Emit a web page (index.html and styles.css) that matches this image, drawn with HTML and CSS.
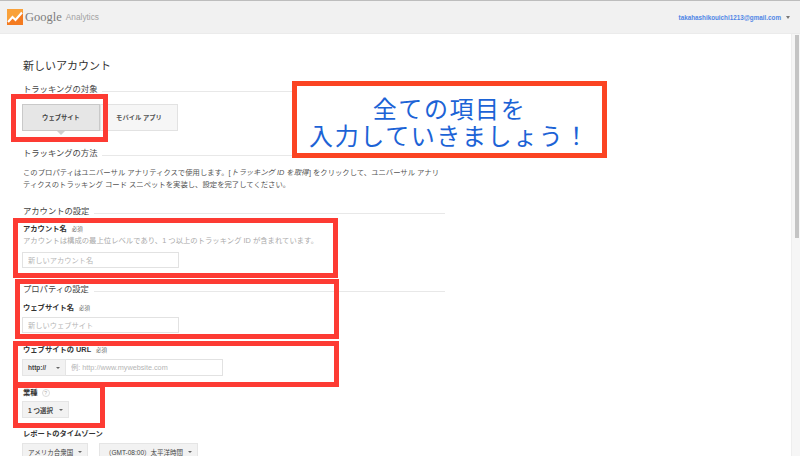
FILE: index.html
```html
<!DOCTYPE html>
<html lang="ja">
<head>
  <meta charset="UTF-8">
  <title>新しいアカウント - Google Analytics</title>
  <link rel="stylesheet" href="styles.css">
</head>
<body>
  <header class="topbar">
    <div class="brand">
      <svg class="logo" width="16" height="16" viewBox="0 0 16 16">
        <rect width="16" height="16" fill="#f47b20"/>
        <path d="M0 0 H16 V3 L8.5 10 L5.5 7 L0 12 Z" fill="#f9a13a"/>
        <path d="M1 13 L5.5 8 L8.5 11 L15 3.5" fill="none" stroke="#fff" stroke-width="2.2"/>
      </svg>
      <span class="brand-google">Google</span>
      <span class="brand-product">Analytics</span>
    </div>
    <div class="account">
      <span class="email">takahashikouichi1213@gmail.com</span>
      <i class="caret caret-dark"></i>
    </div>
  </header>

  <main class="content">
    <h1 class="title">新しいアカウント</h1>

    <h2 class="section-head"><span>トラッキングの対象</span></h2>
    <div class="toggle">
      <button class="toggle-btn active">ウェブサイト</button>
      <button class="toggle-btn">モバイル アプリ</button>
    </div>

    <h2 class="section-head method"><span>トラッキングの方法</span></h2>
    <p class="desc">このプロパティはユニバーサル アナリティクスで使用します。[<em>トラッキング ID を取得</em>] をクリックして、ユニバーサル アナリティクスのトラッキング コード スニペットを実装し、設定を完了してください。</p>

    <h2 class="section-head account-head"><span>アカウントの設定</span></h2>
    <div class="field">
      <label class="label">アカウント名<small>必須</small></label>
      <p class="hint">アカウントは構成の最上位レベルであり、1 つ以上のトラッキング ID が含まれています。</p>
      <input class="input" placeholder="新しいアカウント名">
    </div>

    <h2 class="section-head property-head"><span>プロパティの設定</span></h2>
    <div class="field site-name">
      <label class="label">ウェブサイト名<small>必須</small></label>
      <input class="input" placeholder="新しいウェブサイト">
    </div>
    <div class="field site-url">
      <label class="label">ウェブサイトの URL<small>必須</small></label>
      <div class="url-row">
        <div class="select scheme">http://<i class="caret"></i></div>
        <input class="input url" placeholder="例: http://www.mywebsite.com">
      </div>
    </div>
    <div class="field industry">
      <label class="label">業種<i class="help">?</i></label>
      <div class="select pick">1 つ選択<i class="caret"></i></div>
    </div>
    <div class="field timezone">
      <label class="label">レポートのタイムゾーン</label>
      <div class="tz-row">
        <div class="select country">アメリカ合衆国<i class="caret"></i></div>
        <div class="select zone">（GMT-08:00）太平洋時間<i class="caret"></i></div>
      </div>
    </div>
  </main>

  <div class="scrollbar"><div class="thumb"></div></div>

  <!-- 赤枠の注釈 -->
  <div class="mark mark-target"></div>
  <div class="mark mark-account"></div>
  <div class="mark mark-property"></div>
  <div class="mark mark-url"></div>
  <div class="mark mark-industry"></div>
  <div class="callout">全ての項目を<br>入力していきましょう！</div>
</body>
</html>
```

FILE: styles.css
```css
* {
  box-sizing: border-box;
}

html,
body {
  height: 456px;
  overflow: hidden;
}

body {
  margin: 0;
  background: #fff;
  color: #444;
  font-family: "Liberation Sans", "Noto Sans CJK JP", sans-serif;
  font-size: 8px;
}

.topbar {
  height: 34px;
  display: flex;
  justify-content: space-between;
  align-items: center;
  background: #f1f1f1;
  border-top: 1px solid #bdbdbd;
  border-bottom: 1px solid #ebebeb;
  padding: 0 7px;
}

.brand {
  display: flex;
  align-items: center;
}

.logo {
  margin-right: 2px;
}

.brand-google {
  font-family: "Liberation Serif", serif;
  font-size: 12.5px;
  color: #7d7d7d;
  margin-right: 4px;
}

.brand-product {
  font-size: 8.3px;
  color: #a3a3a3;
}

.account {
  display: flex;
  align-items: center;
}

.email {
  color: #4f86e6;
  font-size: 6.3px;
  font-weight: bold;
}

.caret {
  display: inline-block;
  width: 0;
  height: 0;
  flex: none;
  border-left: 2px solid transparent;
  border-right: 2px solid transparent;
  border-top: 2px solid #666;
}

.caret-dark {
  margin: 0 3px 0 5px;
  border-left-width: 2.5px;
  border-right-width: 2.5px;
  border-top-width: 3px;
  border-top-color: #777;
}

.content {
  width: 445px;
  padding: 24px 0 0 22px;
}

.title {
  margin: 0;
  padding-left: 1px;
  font-size: 11px;
  line-height: 16px;
  font-weight: normal;
  color: #333;
}

.section-head {
  display: flex;
  align-items: flex-end;
  margin: 9px 0 0;
  padding-left: 1px;
  font-size: 8.3px;
  line-height: 12px;
  font-weight: normal;
  color: #444;
}

.section-head::after {
  content: "";
  flex: 1;
  margin: 0 0 3px 5px;
  border-bottom: 1px solid #e8e8e8;
}

.toggle {
  display: flex;
  margin-top: 9px;
}

.toggle-btn {
  width: 78px;
  height: 27px;
  padding: 0;
  border: 1px solid #e2e2e2;
  background: #f6f6f6;
  color: #555;
  font: bold 6.3px "Liberation Sans", "Noto Sans CJK JP", sans-serif;
}

.toggle-btn.active {
  position: relative;
  border-color: #c9c9c9;
  background: #e6e6e6;
  color: #444;
}

.toggle-btn.active::after {
  content: "";
  position: absolute;
  left: 34px;
  top: 26px;
  border-left: 4px solid transparent;
  border-right: 4px solid transparent;
  border-top: 4px solid #d0d0d0;
}

.method {
  margin-top: 16px;
}

.desc {
  margin: 8px 0 0;
  padding-left: 1px;
  font-size: 7.35px;
  line-height: 12px;
  color: #555;
}

.desc em {
  margin: 0 0.5px;
}

.account-head {
  margin-top: 14px;
}

.field {
  margin-top: 6px;
}

.label {
  display: block;
  padding-left: 1px;
  font-size: 7.3px;
  line-height: 12px;
  font-weight: bold;
  color: #333;
}

.label small {
  margin-left: 5px;
  font-size: 5.5px;
  font-weight: normal;
  color: #666;
}

.hint {
  margin: 0;
  padding-left: 1px;
  font-size: 7.35px;
  line-height: 12px;
  color: #aaa;
}

.input {
  display: block;
  width: 157px;
  height: 16px;
  margin-top: 5px;
  padding: 0 5px;
  border: 1px solid #e2e2e2;
  font: 7.25px "Liberation Sans", "Noto Sans CJK JP", sans-serif;
  background: #fff;
}

.input::placeholder {
  color: #b5b5b5;
  opacity: 1;
}

.property-head {
  margin-top: 15px;
}

.site-name {
  margin-top: 7px;
}

.site-name .input {
  margin-top: 3px;
}

.site-url {
  margin-top: 11px;
}

.url-row,
.tz-row {
  display: flex;
  margin-top: 3px;
}

.url {
  width: 157px;
  height: 17px;
  margin-top: 0;
  border-left: none;
}

.select {
  display: flex;
  justify-content: space-between;
  align-items: center;
  height: 17px;
  padding: 0 5px;
  border: 1px solid #e5e5e5;
  background: #f2f2f2;
  color: #444;
  font-size: 6.5px;
  font-weight: bold;
  white-space: nowrap;
}

.scheme {
  width: 44px;
}

.industry {
  margin-top: 11px;
}

.help {
  display: inline-block;
  width: 8px;
  height: 8px;
  margin-left: 4px;
  border: 1px solid #ddd;
  border-radius: 50%;
  color: #aaa;
  font-size: 5px;
  font-style: normal;
  font-weight: normal;
  line-height: 6px;
  text-align: center;
}

.pick {
  width: 47px;
  margin-top: 2px;
}

.timezone {
  margin-top: 10px;
}

.country {
  width: 66px;
  margin-right: 11px;
  font-weight: normal;
}

.zone {
  width: 99px;
  font-weight: normal;
}

.scrollbar {
  position: absolute;
  top: 34px;
  right: 0;
  bottom: 0;
  width: 9px;
  padding: 1px 1px 0 3px;
  background: #f6f6f6;
  border-left: 1px solid #eee;
}

.thumb {
  height: 203px;
  background: #c4c4c4;
}

.mark {
  position: absolute;
  border: 5px solid #fd3b33;
}

.mark-target {
  left: 11px;
  top: 94px;
  width: 97px;
  height: 48px;
}

.mark-account {
  left: 13px;
  top: 218px;
  width: 325px;
  height: 60px;
}

.mark-property {
  left: 15px;
  top: 279px;
  width: 324px;
  height: 60px;
}

.mark-url {
  left: 13px;
  top: 341px;
  width: 326px;
  height: 46px;
}

.mark-industry {
  left: 13px;
  top: 383px;
  width: 92px;
  height: 45px;
}

.callout {
  position: absolute;
  left: 292px;
  top: 81px;
  width: 315px;
  height: 77px;
  padding-top: 10px;
  border: 5px solid #fb4422;
  background: #fff;
  color: #1c63d6;
  font-size: 24px;
  line-height: 27px;
  letter-spacing: 1.6px;
  text-align: center;
}
```
